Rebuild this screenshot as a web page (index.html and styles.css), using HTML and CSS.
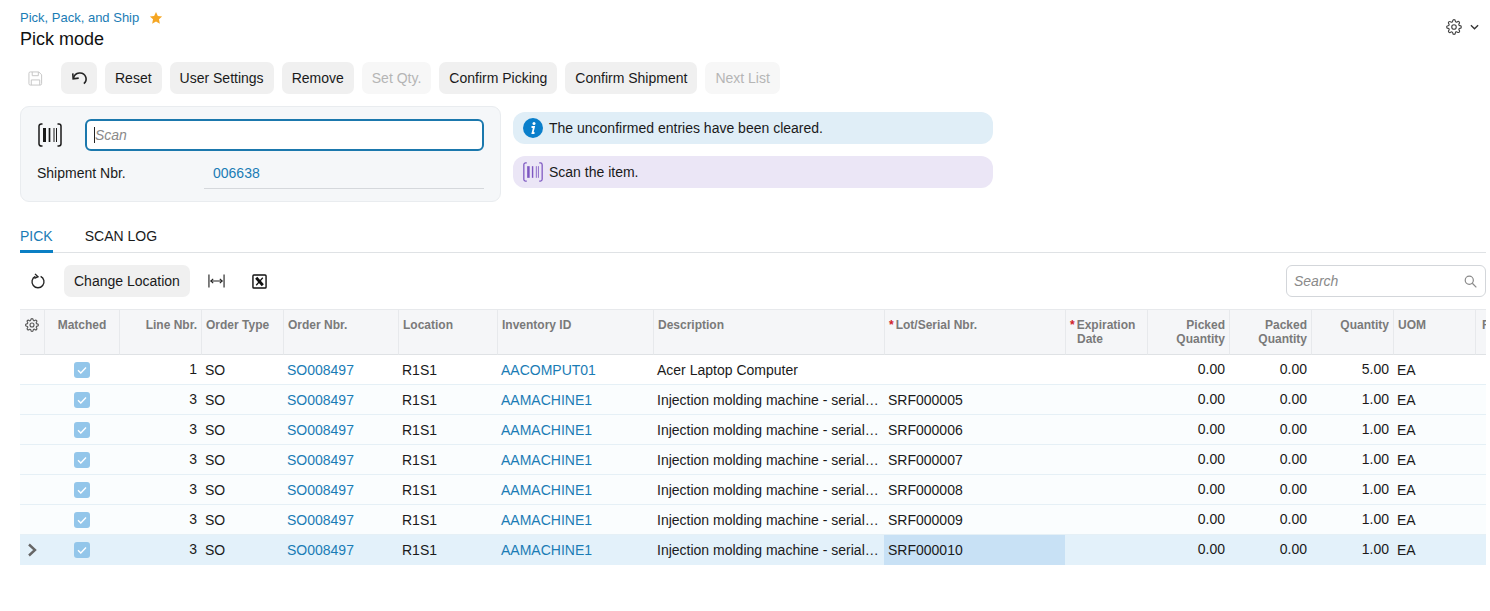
FILE: index.html
```html
<!DOCTYPE html>
<html lang="en">
<head>
<meta charset="utf-8">
<title>Pick, Pack, and Ship</title>
<link rel="stylesheet" href="styles.css">
</head>
<body>
<svg class="defs" aria-hidden="true">
  <symbol id="gear" viewBox="0 0 24 24"><circle cx="12" cy="12" r="3.4"/><path d="M19.4 15a1.65 1.65 0 0 0 .33 1.82l.06.06a2 2 0 0 1 0 2.83 2 2 0 0 1-2.83 0l-.06-.06a1.65 1.65 0 0 0-1.82-.33 1.65 1.65 0 0 0-1 1.51V21a2 2 0 0 1-2 2 2 2 0 0 1-2-2v-.09A1.65 1.65 0 0 0 9 19.4a1.65 1.65 0 0 0-1.82.33l-.06.06a2 2 0 0 1-2.83 0 2 2 0 0 1 0-2.83l.06-.06a1.65 1.65 0 0 0 .33-1.82 1.65 1.65 0 0 0-1.51-1H3a2 2 0 0 1-2-2 2 2 0 0 1 2-2h.09A1.65 1.65 0 0 0 4.6 9a1.65 1.65 0 0 0-.33-1.82l-.06-.06a2 2 0 0 1 0-2.83 2 2 0 0 1 2.83 0l.06.06a1.65 1.65 0 0 0 1.82.33H9a1.65 1.65 0 0 0 1-1.51V3a2 2 0 0 1 2-2 2 2 0 0 1 2 2v.09a1.65 1.65 0 0 0 1 1.51 1.65 1.65 0 0 0 1.82-.33l.06-.06a2 2 0 0 1 2.83 0 2 2 0 0 1 0 2.83l-.06.06a1.65 1.65 0 0 0-.33 1.82V9a1.65 1.65 0 0 0 1.51 1H21a2 2 0 0 1 2 2 2 2 0 0 1-2 2h-.09a1.65 1.65 0 0 0-1.51 1z"/></symbol>
  <symbol id="barcode" viewBox="0 0 24 24"><path d="M4.500 1H3.200A2.200 2.200 0 0 0 1 3.200v17.600A2.200 2.200 0 0 0 3.200 23h1.300M19.500 1h1.300A2.200 2.200 0 0 1 23 3.200v17.600a2.200 2.200 0 0 1-2.200 2.200h-1.300" fill="none"/><path class="bar-thick" d="M6.500 5v14"/><path class="bar-mid" d="M11.500 5v14"/><path class="bar-thin" d="M16 5v14M18.500 5v14"/></symbol>
  <symbol id="check" viewBox="0 0 16 16"><path d="M4 8.300l2.800 2.700L12 5.500"/></symbol>
</svg>

<header class="page-head">
  <div>
    <div class="crumb"><a class="link" href="#">Pick, Pack, and Ship</a>
      <svg class="star" viewBox="0 0 24 24"><path d="M12 1.500l3.200 7 7.300.8-5.400 5 1.500 7.500L12 18l-6.600 3.800 1.500-7.500-5.400-5 7.300-.8z"/></svg>
    </div>
    <h1 class="title">Pick mode</h1>
  </div>
  <div class="head-tools">
    <svg class="gear-icon"><use href="#gear"/></svg>
    <svg class="chev-down" viewBox="0 0 10 6"><path d="M1 1l4 4 4-4"/></svg>
  </div>
</header>

<div class="toolbar">
  <span class="save-btn">
    <svg class="save-icon" viewBox="0 0 16 16"><path d="M2.500 1h9l3 3v9.500a1.500 1.500 0 0 1-1.500 1.500H2.500A1.500 1.500 0 0 1 1 13.500v-11A1.500 1.500 0 0 1 2.500 1z"/><path d="M4.500 1v4h6.500V1M3.500 15V9.500h9V15"/></svg>
  </span>
  <button class="btn btn-icon">
    <svg class="undo-icon" viewBox="0 0 24 24"><path d="M3.500 5.500l.5 7 7-1"/><path d="M4.500 12A8 8 0 0 1 20 10.500a7.500 7.500 0 0 1-2.500 8"/></svg>
  </button>
  <button class="btn">Reset</button>
  <button class="btn">User Settings</button>
  <button class="btn">Remove</button>
  <button class="btn btn-off">Set Qty.</button>
  <button class="btn">Confirm Picking</button>
  <button class="btn">Confirm Shipment</button>
  <button class="btn btn-off">Next List</button>
</div>

<section class="scan-area">
  <div class="scan-panel">
    <div class="scan-row">
      <svg class="scan-icon"><use href="#barcode"/></svg>
      <div class="scan-input"><span class="caret"></span><span class="placeholder">Scan</span></div>
    </div>
    <div class="ship-row">
      <span class="ship-label">Shipment Nbr.</span>
      <a class="ship-value link" href="#">006638</a>
    </div>
  </div>
  <div class="messages">
    <div class="msg msg-info">
      <svg class="msg-icon" viewBox="0 0 20 20"><circle class="info-disc" cx="10" cy="10" r="10"/><circle class="info-mark" cx="11" cy="5.500" r="1.500"/><path class="info-stem" d="M8.500 9h2.500l-1.500 6h2"/></svg>
      <span>The unconfirmed entries have been cleared.</span>
    </div>
    <div class="msg msg-scan">
      <svg class="msg-icon msg-bar"><use href="#barcode"/></svg>
      <span>Scan the item.</span>
    </div>
  </div>
</section>

<nav class="tabs">
  <a class="tab tab-on" href="#">PICK</a>
  <a class="tab" href="#">SCAN LOG</a>
</nav>

<div class="grid-tools">
  <div class="grid-tools-left">
    <svg class="refresh-icon" viewBox="0 0 24 24"><path d="M8.500 5.800a8 8 0 1 0 7 0"/><path d="M8 2.500l4 3.800-4.800 2.200"/></svg>
    <button class="btn">Change Location</button>
    <svg class="fit-icon" viewBox="0 0 18 14"><path d="M1 0v14M17 0v14M3 7h12"/><path d="M5.500 4.800L3 7l2.500 2.200M12.500 4.800L15 7l-2.500 2.200"/></svg>
    <svg class="xl-icon" viewBox="0 0 16 16"><rect x="1" y="1" width="14" height="14" rx="1"/><path class="xl-heavy" d="M4.500 4l7 8"/><path class="xl-light" d="M11.500 4l-7 8"/></svg>
  </div>
  <div class="search-box">
    <span class="placeholder">Search</span>
    <svg class="search-icon" viewBox="0 0 16 16"><circle cx="6.500" cy="6.500" r="5"/><path d="M10.200 10.200l5 5"/></svg>
  </div>
</div>

<div class="grid-wrap">
<table class="grid">
  <colgroup>
    <col class="w24"><col class="w75"><col class="w82"><col class="w82"><col class="w115"><col class="w99"><col class="w156"><col class="w231"><col class="w181"><col class="w82"><col class="w82"><col class="w82"><col class="w82"><col class="w82">
  </colgroup>
  <thead>
    <tr>
      <th class="center"><svg class="th-gear"><use href="#gear"/></svg></th>
      <th class="center">Matched</th>
      <th class="num">Line Nbr.</th>
      <th>Order Type</th>
      <th>Order Nbr.</th>
      <th>Location</th>
      <th>Inventory ID</th>
      <th>Description</th>
      <th><span class="req">*</span>Lot/Serial Nbr.</th>
      <th><span class="req">*</span>Expiration<br><span class="th-indent">Date</span></th>
      <th class="num">Picked<br>Quantity</th>
      <th class="num">Packed<br>Quantity</th>
      <th class="num">Quantity</th>
      <th>UOM</th>
      <th class="th-last">Remarks</th>
    </tr>
  </thead>
  <tbody>
    <tr><td></td><td class="center"><span class="cb"><svg class="cb-check"><use href="#check"/></svg></span></td><td class="num">1</td><td>SO</td><td><a class="link" href="#">SO008497</a></td><td>R1S1</td><td><a class="link" href="#">AACOMPUT01</a></td><td>Acer Laptop Computer</td><td></td><td></td><td class="num">0.00</td><td class="num">0.00</td><td class="num">5.00</td><td>EA</td><td></td></tr>
    <tr><td></td><td class="center"><span class="cb"><svg class="cb-check"><use href="#check"/></svg></span></td><td class="num">3</td><td>SO</td><td><a class="link" href="#">SO008497</a></td><td>R1S1</td><td><a class="link" href="#">AAMACHINE1</a></td><td class="clip">Injection molding machine - serial tracked</td><td>SRF000005</td><td></td><td class="num">0.00</td><td class="num">0.00</td><td class="num">1.00</td><td>EA</td><td></td></tr>
    <tr><td></td><td class="center"><span class="cb"><svg class="cb-check"><use href="#check"/></svg></span></td><td class="num">3</td><td>SO</td><td><a class="link" href="#">SO008497</a></td><td>R1S1</td><td><a class="link" href="#">AAMACHINE1</a></td><td class="clip">Injection molding machine - serial tracked</td><td>SRF000006</td><td></td><td class="num">0.00</td><td class="num">0.00</td><td class="num">1.00</td><td>EA</td><td></td></tr>
    <tr><td></td><td class="center"><span class="cb"><svg class="cb-check"><use href="#check"/></svg></span></td><td class="num">3</td><td>SO</td><td><a class="link" href="#">SO008497</a></td><td>R1S1</td><td><a class="link" href="#">AAMACHINE1</a></td><td class="clip">Injection molding machine - serial tracked</td><td>SRF000007</td><td></td><td class="num">0.00</td><td class="num">0.00</td><td class="num">1.00</td><td>EA</td><td></td></tr>
    <tr><td></td><td class="center"><span class="cb"><svg class="cb-check"><use href="#check"/></svg></span></td><td class="num">3</td><td>SO</td><td><a class="link" href="#">SO008497</a></td><td>R1S1</td><td><a class="link" href="#">AAMACHINE1</a></td><td class="clip">Injection molding machine - serial tracked</td><td>SRF000008</td><td></td><td class="num">0.00</td><td class="num">0.00</td><td class="num">1.00</td><td>EA</td><td></td></tr>
    <tr><td></td><td class="center"><span class="cb"><svg class="cb-check"><use href="#check"/></svg></span></td><td class="num">3</td><td>SO</td><td><a class="link" href="#">SO008497</a></td><td>R1S1</td><td><a class="link" href="#">AAMACHINE1</a></td><td class="clip">Injection molding machine - serial tracked</td><td>SRF000009</td><td></td><td class="num">0.00</td><td class="num">0.00</td><td class="num">1.00</td><td>EA</td><td></td></tr>
    <tr class="row-on"><td class="center"><svg class="row-chev" viewBox="0 0 10 14"><path d="M2 1.500L8 7l-6 5.500"/></svg></td><td class="center"><span class="cb"><svg class="cb-check"><use href="#check"/></svg></span></td><td class="num">3</td><td>SO</td><td><a class="link" href="#">SO008497</a></td><td>R1S1</td><td><a class="link" href="#">AAMACHINE1</a></td><td class="clip">Injection molding machine - serial tracked</td><td class="cell-on">SRF000010</td><td></td><td class="num">0.00</td><td class="num">0.00</td><td class="num">1.00</td><td>EA</td><td></td></tr>
  </tbody>
</table>
</div>
</body>
</html>
```
FILE: styles.css
```css
* { box-sizing: border-box; }
html, body { margin: 0; padding: 0; }
body {
  font-family: "Liberation Sans", Arial, sans-serif;
  font-size: 14px;
  color: #1a1a1a;
  background: #fff;
  padding: 0 4px 0 20px;
  height: 611px;
  overflow: hidden;
}
.defs { display: none; }
.link { color: #1a7cb5; text-decoration: none; }

.page-head { display: flex; justify-content: space-between; height: 62px; padding-top: 10px; }
.crumb { display: flex; align-items: center; gap: 10px; font-size: 13px; line-height: 16px; }
.star { width: 14px; height: 14px; fill: #f5a623; }
.title { margin: 2px 0 0; font-size: 18px; font-weight: 400; line-height: 22px; color: #111; }
.head-tools { display: flex; align-items: flex-start; gap: 7px; padding: 9px 7px 0 0; }
.gear-icon { width: 16px; height: 16px; margin-right: 1px; fill: none; stroke: #444; stroke-width: 1.700; }
.chev-down { width: 9px; height: 6px; margin-top: 5px; fill: none; stroke: #333; stroke-width: 1.500; }

.toolbar { display: flex; align-items: center; gap: 8px; height: 32px; }
.save-btn { width: 33px; display: flex; justify-content: center; padding-right: 2px; }
.save-icon { width: 15px; height: 15px; fill: none; stroke: #c4c4c4; stroke-width: 1; }
.btn {
  height: 32px;
  padding: 0 10px;
  border: 0;
  border-radius: 7px;
  background: #f0f0f0;
  font: 14px "Liberation Sans", Arial, sans-serif;
  color: #1a1a1a;
}
.btn-icon { width: 36px; padding: 0; display: flex; align-items: center; justify-content: center; }
.btn-off { background: #f7f7f7; color: #b5b5b5; }
.undo-icon { width: 19px; height: 19px; fill: none; stroke: #222; stroke-width: 2; }

.scan-area { display: flex; gap: 12px; margin-top: 12px; align-items: flex-start; }
.scan-panel {
  width: 481px;
  height: 96px;
  background: #f5f7f9;
  border: 1px solid #e9ecef;
  border-radius: 9px;
  padding: 12px 16px 0 16px;
}
.scan-row { display: flex; align-items: center; }
.scan-icon { width: 24px; height: 24px; margin-left: 1px; fill: none; stroke: #1a1a1a; stroke-width: 1.500; }
.bar-thick { stroke-width: 3; }
.bar-mid { stroke-width: 1.700; }
.bar-thin { stroke-width: 1; }
.scan-input {
  width: 399px;
  height: 32px;
  margin-left: 23px;
  display: flex;
  align-items: center;
  background: #fff;
  border: 2px solid #1b78ad;
  border-radius: 6px;
  padding-left: 7px;
}
.caret { width: 1px; height: 16px; background: #222; }
.placeholder { font-style: italic; color: #8a8a8a; }
.ship-row { display: flex; align-items: flex-start; margin-top: 7px; }
.ship-label { width: 167px; line-height: 30px; }
.ship-value { width: 280px; height: 31px; line-height: 30px; padding-left: 9px; border-bottom: 1px solid #d5d8dc; }

.messages { width: 480px; padding-top: 6px; display: flex; flex-direction: column; gap: 12px; }
.msg { height: 32px; border-radius: 12px; display: flex; align-items: center; gap: 6px; padding-left: 10px; }
.msg-info { background: #e0eef7; }
.msg-scan { background: #ebe6f6; }
.msg-icon { width: 20px; height: 20px; flex: none; }
.info-disc { fill: #0a7fcb; }
.info-mark { fill: #fff; }
.info-stem { fill: none; stroke: #fff; stroke-width: 1.800; }
.msg-bar { fill: none; stroke: #7d57c1; stroke-width: 1.500; }

.tabs {
  display: flex;
  gap: 32px;
  margin-top: 21px;
  height: 30px;
  border-bottom: 1px solid #dfe2e5;
}
.tab { color: #1a1a1a; text-decoration: none; line-height: 26px; height: 30px; }
.tab-on { color: #1a7cb5; border-bottom: 3px solid #0a7fc4; }

.grid-tools { display: flex; justify-content: space-between; align-items: center; margin-top: 12px; height: 32px; }
.grid-tools-left { display: flex; align-items: center; }
.refresh-icon { width: 18px; height: 18px; margin-left: 9px; margin-right: 17px; fill: none; stroke: #222; stroke-width: 1.800; }
.fit-icon { width: 17px; height: 14px; margin-left: 18px; fill: none; stroke: #222; stroke-width: 1.200; }
.xl-icon { width: 15px; height: 15px; margin-left: 27px; fill: none; stroke: #111; stroke-width: 1.500; }
.xl-heavy { stroke-width: 3; }
.xl-light { stroke-width: 1.300; }
.search-box {
  width: 200px;
  height: 32px;
  border: 1px solid #d3d6da;
  border-radius: 6px;
  display: flex;
  align-items: center;
  justify-content: space-between;
  padding: 0 8px 0 7px;
}
.search-icon { width: 13px; height: 13px; fill: none; stroke: #8a8a8a; stroke-width: 1.500; }

.grid-wrap { margin-top: 12px; width: 1466px; overflow: hidden; }
.grid { border-collapse: separate; border-spacing: 0; table-layout: fixed; width: 1537px; }
.w24 { width: 24px; } .w75 { width: 75px; } .w82 { width: 82px; } .w99 { width: 99px; }
.w115 { width: 115px; } .w156 { width: 156px; } .w181 { width: 181px; } .w231 { width: 231px; }
.grid th {
  height: 46px;
  vertical-align: top;
  text-align: left;
  padding: 8px 4px 0 4px;
  font-size: 12px;
  line-height: 14px;
  font-weight: 700;
  color: #7a7a7a;
  background: #f5f6f8;
  border-top: 1px solid #e7e9ec;
  border-bottom: 1px solid #dfe2e5;
  border-left: 1px solid #e7e9ec;
  white-space: nowrap;
}
.grid th:first-child { border-left: 0; }
.grid th.th-last { padding-left: 6px; }
.grid td {
  height: 30px;
  padding: 2px 4px 0;
  line-height: 27px;
  vertical-align: top;
  border-bottom: 1px solid #e5f0f6;
  white-space: nowrap;
  overflow: hidden;
}
.grid tbody tr:nth-child(n+2) td { background: #fafdfe; }
.grid tbody tr.row-on td { background: #e3f1fa; border-bottom-color: #e3f1fa; }
.grid tbody tr.row-on td.cell-on { background: #c8e1f5; border-bottom-color: #c8e1f5; }
.grid .center { text-align: center; padding-left: 0; padding-right: 0; }
.grid .num { text-align: right; }
.grid td.num { padding-top: 1px; }
.grid .clip { text-overflow: ellipsis; }
.req { color: #d0202a; margin-right: 2px; }
.th-indent { margin-left: 7px; }
.th-gear { width: 14px; height: 14px; fill: none; stroke: #555; stroke-width: 1.900; }
.cb { display: inline-flex; width: 16px; height: 16px; margin-top: -2px; border-radius: 3px; background: #93c6ea; vertical-align: middle; }
.cb-check { width: 16px; height: 16px; fill: none; stroke: #fff; stroke-width: 1.400; }
.row-chev { width: 10px; height: 14px; margin-top: -2px; vertical-align: middle; fill: none; stroke: #666; stroke-width: 2.400; }
```
